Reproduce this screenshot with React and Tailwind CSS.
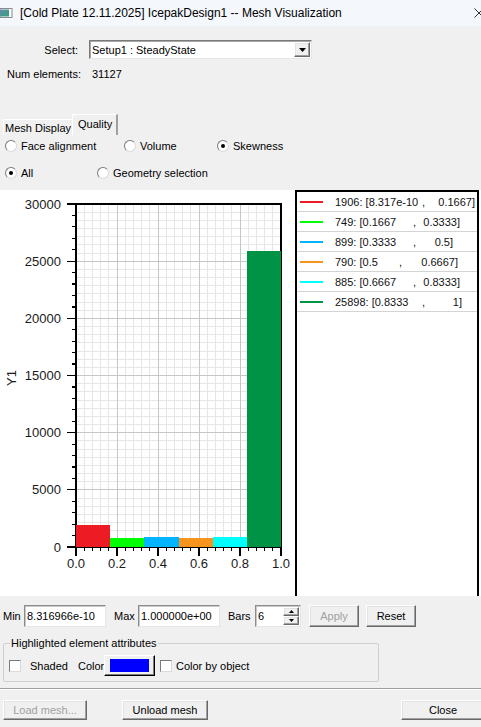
import React from 'react';

const X0 = 76;
const X1 = 281;
const YT = 14;
const YB = 357;
const W = X1 - X0;
const H = YB - YT;
const MAXV = 30000;

const bins = [
  { n: 1906, color: '#ed1c24' },
  { n: 749, color: '#00ff00' },
  { n: 899, color: '#00b4ff' },
  { n: 790, color: '#f7941d' },
  { n: 885, color: '#00ffff' },
  { n: 25898, color: '#009245' },
];

const legend = [
  { color: '#ed1c24', a: '1906: [8.317e-10', pre: 'w-[87px]', b: '0.1667]', post: 'w-[50px]' },
  { color: '#00ff00', a: '749: [0.1667', pre: 'w-[78px]', b: '0.3333]', post: 'w-[44px]' },
  { color: '#00b4ff', a: '899: [0.3333', pre: 'w-[78px]', b: '0.5]', post: 'w-[37px]' },
  { color: '#f7941d', a: '790: [0.5', pre: 'w-[64px]', b: '0.6667]', post: 'w-[56px]' },
  { color: '#00ffff', a: '885: [0.6667', pre: 'w-[78px]', b: '0.8333]', post: 'w-[44px]' },
  { color: '#009245', a: '25898: [0.8333', pre: 'w-[87px]', b: '1]', post: 'w-[37px]' },
];

function Chart() {
  const vMinor = [];
  const vMajor = [];
  for (let i = 1; i < 25; i++) {
    const x = X0 + (i * W) / 25;
    (i % 5 === 0 ? vMajor : vMinor).push(x);
  }
  const hMinor = [];
  const hMajor = [];
  for (let j = 1; j < 42; j++) {
    const y = YB - (j * H) / 42;
    (j % 7 === 0 ? hMajor : hMinor).push(y);
  }
  const yTicks = [];
  for (let k = 0; k <= 30; k++) {
    const y = YB - (k * H) / 30;
    yTicks.push({ y, major: k % 5 === 0, label: k % 5 === 0 ? String(k * 1000) : null });
  }
  const xTicks = [];
  for (let i = 0; i <= 25; i++) {
    const x = X0 + (i * W) / 25;
    xTicks.push({ x, major: i % 5 === 0, label: i % 5 === 0 ? (i / 25).toFixed(1) : null });
  }
  const bw = W / bins.length;

  return (
    <svg width="295" height="406" className="shrink-0" shapeRendering="crispEdges">
      {vMinor.map((x) => (
        <line key={'vm' + x} x1={x} y1={YT} x2={x} y2={YB} stroke="#e6e6e6" />
      ))}
      {hMinor.map((y) => (
        <line key={'hm' + y} x1={X0} y1={y} x2={X1} y2={y} stroke="#e6e6e6" />
      ))}
      {vMajor.map((x) => (
        <line key={'vM' + x} x1={x} y1={YT} x2={x} y2={YB} stroke="#c6c6c6" />
      ))}
      {hMajor.map((y) => (
        <line key={'hM' + y} x1={X0} y1={y} x2={X1} y2={y} stroke="#c6c6c6" />
      ))}
      <rect x={X0} y={YT} width={W} height={H} fill="none" stroke="#000" strokeWidth="1.4" />
      {yTicks.map((t) => (
        <line key={'yt' + t.y} x1={t.major ? 67 : 72} y1={t.y} x2={X0} y2={t.y} stroke="#000" strokeWidth="1.2" />
      ))}
      {xTicks.map((t) => (
        <line key={'xt' + t.x} x1={t.x} y1={YB} x2={t.x} y2={YB + (t.major ? 9 : 4)} stroke="#000" strokeWidth="1.2" />
      ))}
      {bins.map((b, i) => {
        const h = (b.n / MAXV) * H;
        return <rect key={i} x={X0 + i * bw} y={YB - h} width={bw} height={h} fill={b.color} />;
      })}
      <g fontFamily="'Liberation Sans', Arial, sans-serif" fontSize="13" fill="#1a1a1a" shapeRendering="auto">
        {yTicks
          .filter((t) => t.label)
          .map((t) => (
            <text key={'yl' + t.label} x="61" y={t.y + 4.5} textAnchor="end">
              {t.label}
            </text>
          ))}
        {xTicks
          .filter((t) => t.label)
          .map((t) => (
            <text key={'xl' + t.label} x={t.x} y={YB + 21} textAnchor="middle">
              {t.label}
            </text>
          ))}
        <text x="16" y="188" textAnchor="middle" transform="rotate(-90 16 188)">
          Y1
        </text>
      </g>
    </svg>
  );
}

function Radio({ checked, label }) {
  return (
    <div className="flex items-center">
      <span className="w-[12px] h-[12px] rounded-full bg-white border border-t-[#7a7a7a] border-l-[#7a7a7a] border-r-[#dadada] border-b-[#dadada] flex items-center justify-center shrink-0">
        {checked && <span className="w-[4px] h-[4px] rounded-full bg-black" />}
      </span>
      <span className="ml-[4px] whitespace-nowrap">{label}</span>
    </div>
  );
}

function Check({ className = '' }) {
  return (
    <span
      className={
        'block w-[12px] h-[12px] bg-white border border-t-[#7a7a7a] border-l-[#7a7a7a] border-r-[#dadada] border-b-[#dadada] shrink-0 ' +
        className
      }
    />
  );
}

const raised =
  'bg-[#f0f0f0] border border-t-white border-l-white border-r-[#696969] border-b-[#696969] shadow-[inset_-1px_-1px_0_#a0a0a0,inset_1px_1px_0_#e3e3e3]';
const sunken =
  'bg-white border border-t-[#8c8c8c] border-l-[#8c8c8c] border-r-[#e6e6e6] border-b-[#e6e6e6] shadow-[inset_1px_1px_0_#c8c8c8]';

export default function App() {
  return (
    <div className="w-[481px] h-[727px] overflow-hidden bg-[#f0f0f0] text-black text-[11px] leading-[14px] font-['Liberation_Sans',Arial,sans-serif] flex flex-col">
      {/* title bar */}
      <div className="h-[26px] shrink-0 bg-[#f4f7fc] flex items-center relative">
        <svg width="13" height="10" className="shrink-0 -mt-[1px]">
          <defs>
            <linearGradient id="ic" x1="0" x2="1" y1="0" y2="1">
              <stop offset="0" stopColor="#6a88b0" />
              <stop offset="1" stopColor="#2fa37a" />
            </linearGradient>
          </defs>
          <rect x="0" y="0.5" width="12" height="9" fill="#fff" stroke="#8a8a8a" />
          <rect x="0" y="1.5" width="9" height="7" fill="url(#ic)" />
        </svg>
        <span className="ml-[7px] text-[12px] whitespace-nowrap">
          [Cold Plate 12.11.2025] IcepakDesign1 -- Mesh Visualization
        </span>
        <svg width="10" height="10" className="absolute left-[474px] top-[8px]">
          <path d="M0.5 0.5 L9.5 9.5 M9.5 0.5 L0.5 9.5" stroke="#333" strokeWidth="1" />
        </svg>
      </div>

      {/* select */}
      <div className="mt-[14px] h-[19px] flex items-center shrink-0">
        <span className="w-[78px] text-right">Select:</span>
        <div className="ml-[11px] w-[223px] h-[19px] flex items-center justify-between pl-[1px] pr-[1px] bg-white border border-t-[#7a7a7a] border-l-[#7a7a7a] border-r-[#e6e6e6] border-b-[#e6e6e6] shadow-[inset_1px_1px_0_#a8a8a8]">
          <span className="pl-[1px]">Setup1 : SteadyState</span>
          <span className={'w-[16px] h-[15px] flex items-center justify-center ' + raised}>
            <svg width="7" height="4">
              <path d="M0 0 H7 L3.5 4 Z" fill="#000" />
            </svg>
          </span>
        </div>
      </div>

      {/* num elements */}
      <div className="mt-[8px] h-[14px] flex items-center shrink-0">
        <span className="w-[92px] pl-[7px]">Num elements:</span>
        <span>31127</span>
      </div>

      {/* tabs */}
      <div className="mt-[33px] h-[21px] flex items-end shrink-0">
        <div className="ml-[3px] w-[69px] h-[16px] border-t border-l border-white flex items-center pl-[1px]">
          Mesh Display
        </div>
        <div className="w-[46px] h-[21px] border-t border-l border-white border-r-2 border-r-[#a0a0a0] flex items-center pl-[5px] pb-[2px]">
          Quality
        </div>
      </div>

      {/* radios */}
      <div className="mt-[3px] h-[16px] flex items-center pl-[5px] shrink-0">
        <div className="w-[119px]">
          <Radio label="Face alignment" />
        </div>
        <div className="w-[93px]">
          <Radio label="Volume" />
        </div>
        <Radio checked label="Skewness" />
      </div>
      <div className="mt-[11px] h-[16px] flex items-center pl-[5px] shrink-0">
        <div className="w-[92px]">
          <Radio checked label="All" />
        </div>
        <Radio label="Geometry selection" />
      </div>

      {/* chart + legend */}
      <div className="mt-[9px] h-[406px] bg-white flex shrink-0">
        <Chart />
        <div className="w-[184px] h-full border-t-2 border-l-2 border-r-2 border-black">
          {legend.map((r) => (
            <div key={r.a} className="h-[20px] border-b border-[#d4d4d4] flex items-center">
              <span className="ml-[3px] w-[23px] h-[2px] shrink-0" style={{ backgroundColor: r.color }} />
              <span className="ml-[12px] flex items-center whitespace-nowrap text-[#111]">
                <span className={r.pre}>{r.a}</span>
                <span className="w-[3px]">,</span>
                <span className={r.post + ' text-right'}>{r.b}</span>
              </span>
            </div>
          ))}
        </div>
      </div>

      {/* min max row */}
      <div className="mt-[9px] h-[22px] flex items-center shrink-0">
        <span className="w-[24px] pl-[3px]">Min</span>
        <div className={'w-[82px] h-[22px] flex items-center pl-[2px] ' + sunken}>8.316966e-10</div>
        <span className="w-[32px] pl-[8px]">Max</span>
        <div className={'w-[82px] h-[22px] flex items-center pl-[2px] ' + sunken}>1.000000e+00</div>
        <span className="w-[35px] pl-[8px]">Bars</span>
        <div className={'w-[46px] h-[22px] flex items-center justify-between pl-[2px] pr-[1px] ' + sunken}>
          <span>6</span>
          <div className="flex flex-col">
            <span className={'w-[16px] h-[9px] flex items-center justify-center ' + raised}>
              <svg width="5" height="3">
                <path d="M2.5 0 L5 3 H0 Z" fill="#000" />
              </svg>
            </span>
            <span className={'w-[16px] h-[9px] flex items-center justify-center ' + raised}>
              <svg width="5" height="3">
                <path d="M0 0 H5 L2.5 3 Z" fill="#000" />
              </svg>
            </span>
          </div>
        </div>
        <div className={'ml-[8px] w-[50px] h-[22px] flex items-center justify-center text-[#a0a0a0] ' + raised}>
          Apply
        </div>
        <div className={'ml-[7px] w-[50px] h-[22px] flex items-center justify-center ' + raised}>Reset</div>
      </div>

      {/* highlighted group */}
      <fieldset className="mt-[9px] ml-[3px] w-[376px] border border-[#cfcfcf] rounded-[2px] pl-[5px] pb-[5px] shrink-0">
        <legend className="ml-[1px] px-[1px] leading-[14px]">Highlighted element attributes</legend>
        <div className="mt-[5px] h-[21px] flex items-center">
          <Check />
          <span className="ml-[9px] w-[48px]">Shaded</span>
          <span className="w-[26px]">Color</span>
          <div className="w-[51px] h-[21px] flex items-center justify-center border border-t-white border-l-white border-r-black border-b-black bg-[#f0f0f0] shadow-[inset_-1px_-1px_0_#7a7a7a]">
            <span className="w-[39px] h-[13px] bg-[#0000ff]" />
          </div>
          <Check className="ml-[5px]" />
          <span className="ml-[4px]">Color by object</span>
        </div>
      </fieldset>

      {/* separator */}
      <div className="mt-[6px] h-[1px] bg-[#a0a0a0] shrink-0" />
      <div className="h-[1px] bg-white shrink-0" />

      {/* bottom buttons */}
      <div className="mt-[10px] h-[20px] flex items-center shrink-0">
        <div className={'ml-[3px] w-[84px] h-[20px] flex items-center justify-center text-[#a0a0a0] shrink-0 ' + raised}>
          Load mesh...
        </div>
        <div className={'ml-[35px] w-[86px] h-[20px] flex items-center justify-center shrink-0 ' + raised}>Unload mesh</div>
        <div className={'ml-[193px] w-[84px] h-[20px] flex items-center justify-center shrink-0 ' + raised}>
          Close
        </div>
      </div>
    </div>
  );
}
